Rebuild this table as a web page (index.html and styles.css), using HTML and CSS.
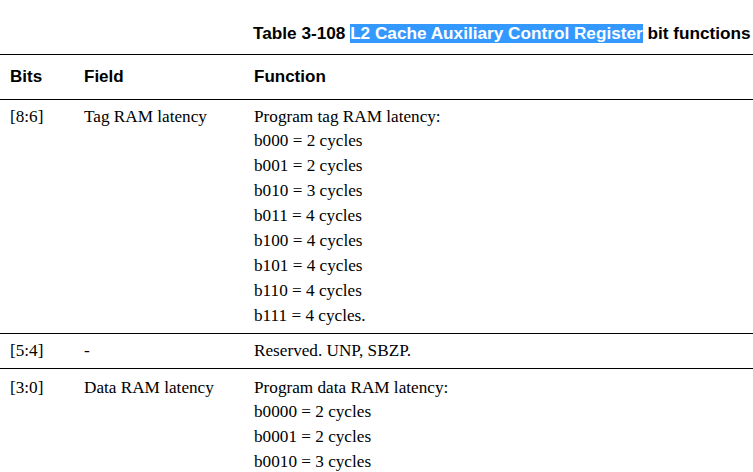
FILE: index.html
```html
<!DOCTYPE html>
<html>
<head>
<meta charset="utf-8">
<link rel="stylesheet" href="styles.css">
</head>
<body>
<div class="caption">Table 3-108 <span class="sel">L2 Cache Auxiliary Control Register</span> bit functions</div>
<div class="table">
  <div class="row head">
    <div class="c bits">Bits</div>
    <div class="c field">Field</div>
    <div class="c func">Function</div>
  </div>
  <div class="row body">
    <div class="c bits">[8:6]</div>
    <div class="c field">Tag RAM latency</div>
    <div class="c func">
      <div>Program tag RAM latency:</div>
      <div>b000 = 2 cycles</div>
      <div>b001 = 2 cycles</div>
      <div>b010 = 3 cycles</div>
      <div>b011 = 4 cycles</div>
      <div>b100 = 4 cycles</div>
      <div>b101 = 4 cycles</div>
      <div>b110 = 4 cycles</div>
      <div>b111 = 4 cycles.</div>
    </div>
  </div>
  <div class="row body mid">
    <div class="c bits">[5:4]</div>
    <div class="c field">-</div>
    <div class="c func"><div>Reserved. UNP, SBZP.</div></div>
  </div>
  <div class="row body last">
    <div class="c bits">[3:0]</div>
    <div class="c field">Data RAM latency</div>
    <div class="c func">
      <div>Program data RAM latency:</div>
      <div>b0000 = 2 cycles</div>
      <div>b0001 = 2 cycles</div>
      <div>b0010 = 3 cycles</div>
    </div>
  </div>
</div>
</body>
</html>
```

FILE: styles.css
```css
html, body {
  margin: 0;
  padding: 0;
  background: #fff;
  overflow: hidden;
}
body {
  width: 753px;
  height: 472px;
  color: #000;
}
.caption {
  font-family: "Liberation Sans", Arial, sans-serif;
  font-weight: bold;
  font-size: 17.2px;
  line-height: 19px;
  padding: 24px 0 0 253px;
  height: 19px;
  white-space: nowrap;
}
.sel {
  background: #3399ff;
  color: #fff;
  display: inline-block;
  line-height: 19px;
}
.table {
  margin-top: 11px;
  border-top: 1.5px solid #000;
}
.row {
  display: grid;
  grid-template-columns: 74px 170px 1fr;
  padding-left: 10px;
  border-bottom: 1.5px solid #000;
}
.row.last {
  border-bottom: none;
  padding-top: 7px;
}
.head {
  height: 43.5px;
  align-items: center;
  font-family: "Liberation Sans", Arial, sans-serif;
  font-weight: bold;
  font-size: 17px;
}
.body {
  font-family: "Liberation Serif", "Times New Roman", serif;
  font-size: 17.2px;
  line-height: 24.9px;
  padding-top: 5px;
  padding-bottom: 4px;
}
.c {
  white-space: nowrap;
}
```
